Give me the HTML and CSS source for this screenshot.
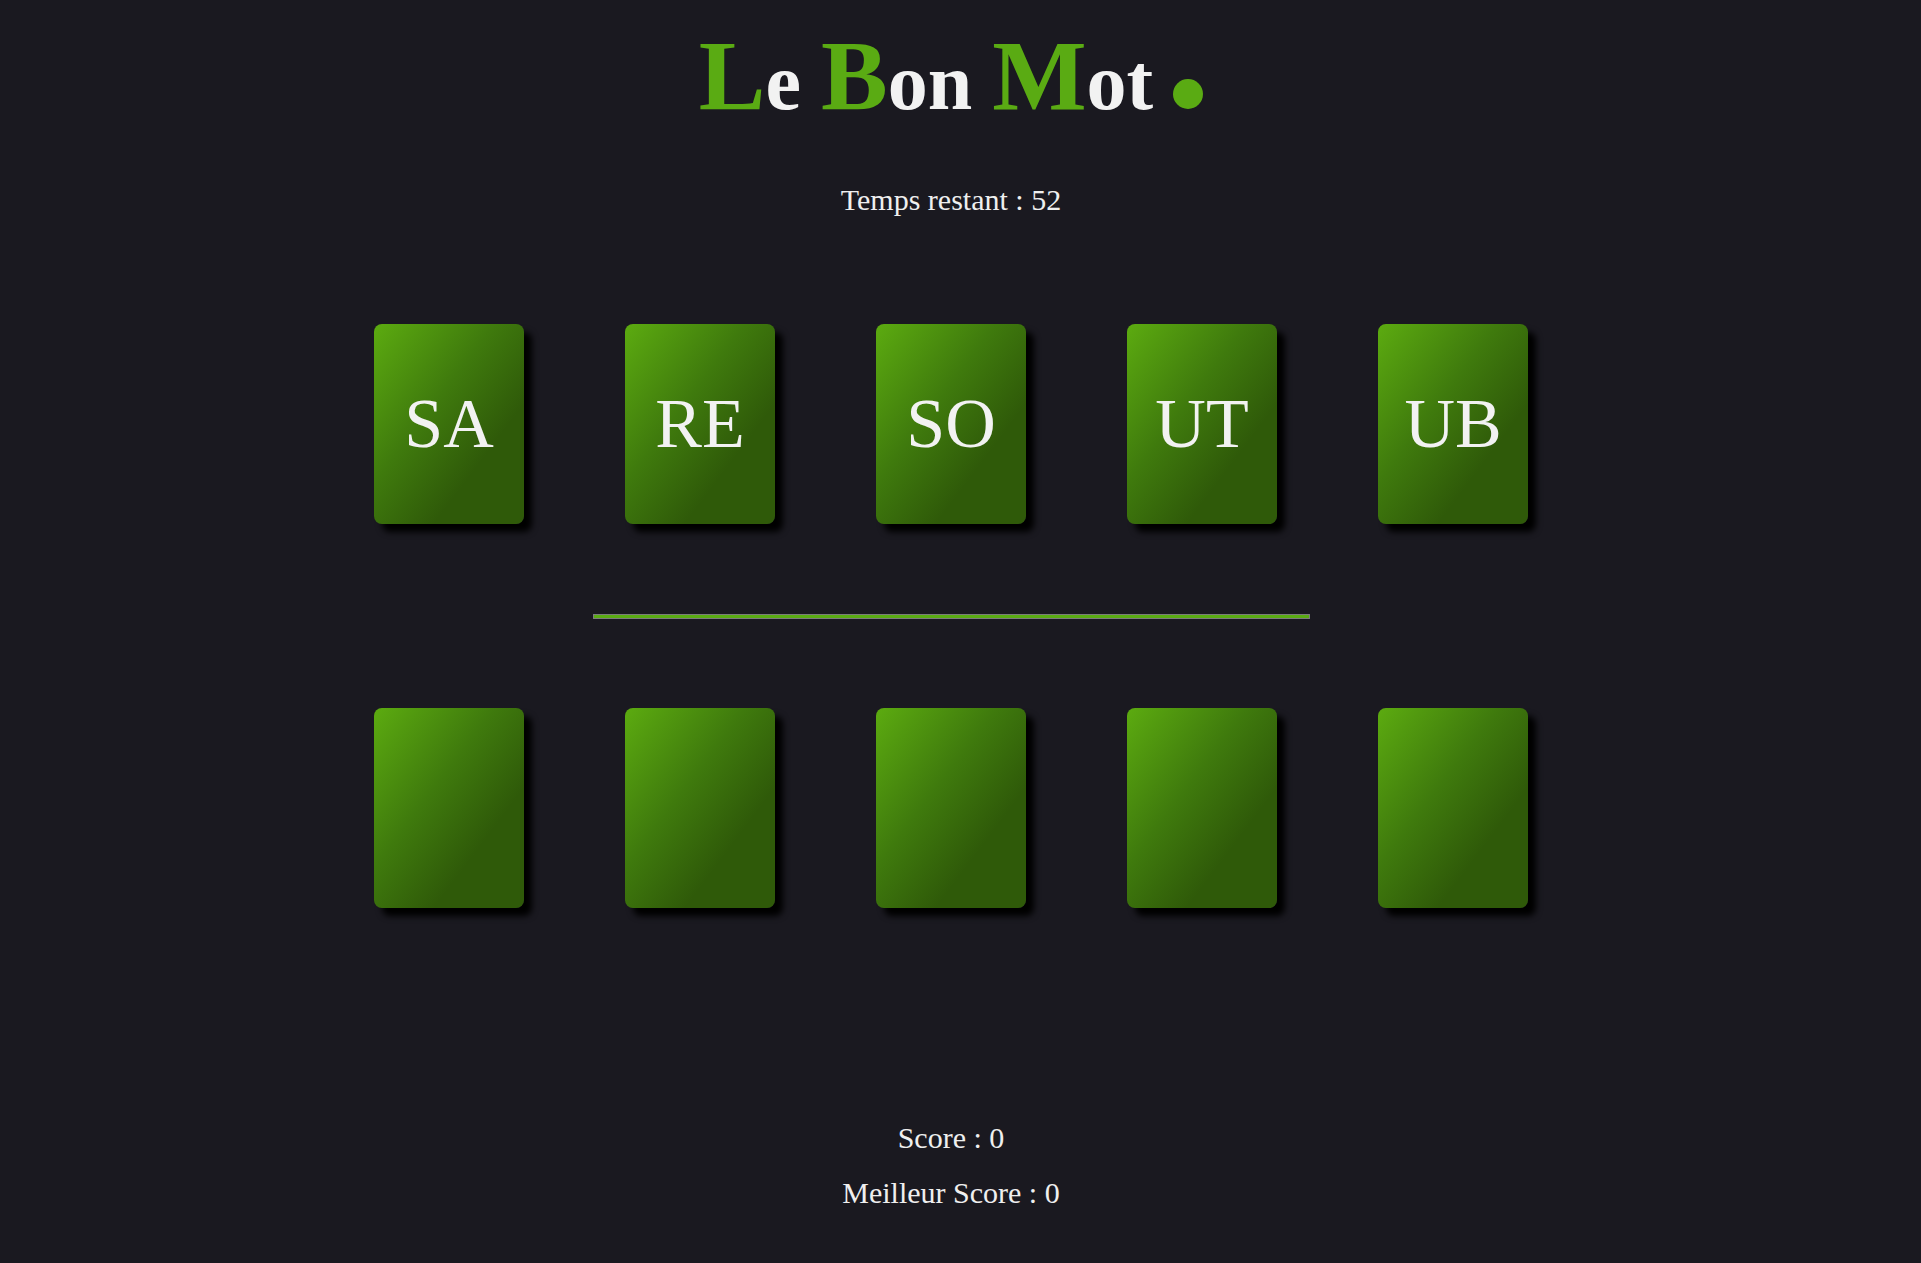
FILE: index.html
```html
<!DOCTYPE html>
<html lang="fr">
<head>
<meta charset="utf-8">
<title>Le Bon Mot</title>
<link rel="stylesheet" href="styles.css">
</head>
<body>
<div class="page">
  <h1 class="title"><span class="cap">L</span>e <span class="cap">B</span>on <span class="cap">M</span>ot <span class="dot"></span></h1>
  <p class="timer">Temps restant : 52</p>
  <div class="row row-top">
    <div class="card">SA</div>
    <div class="card">RE</div>
    <div class="card">SO</div>
    <div class="card">UT</div>
    <div class="card">UB</div>
  </div>
  <hr class="divider">
  <div class="row row-bottom">
    <div class="card"></div>
    <div class="card"></div>
    <div class="card"></div>
    <div class="card"></div>
    <div class="card"></div>
  </div>
  <p class="score">Score : 0</p>
  <p class="best">Meilleur Score : 0</p>
</div>
</body>
</html>
```

FILE: styles.css
```css
html, body {
  margin: 0;
  padding: 0;
  background: #1a1920;
}

body {
  font-family: "Liberation Serif", "Times New Roman", serif;
  color: #efefef;
}

.page {
  width: 1902px;
  display: flex;
  flex-direction: column;
  align-items: center;
}

.title {
  margin: 26px 0 0;
  font-size: 80px;
  line-height: 1;
  font-weight: bold;
  color: #f2f2f2;
  white-space: nowrap;
}

.cap {
  font-size: 100px;
  color: #5aab13;
}

.dot {
  display: inline-block;
  width: 30px;
  height: 30px;
  border-radius: 50%;
  background: #5aab13;
}

.timer,
.score,
.best {
  margin: 0;
  font-size: 30px;
  line-height: 34px;
}

.timer {
  margin-top: 57px;
}

.row {
  display: flex;
  justify-content: center;
  gap: 101px;
}

.row-top {
  margin-top: 107px;
}

.row-bottom {
  margin-top: 89px;
}

.card {
  width: 150px;
  height: 200px;
  border-radius: 8px;
  background: linear-gradient(to bottom right, #5cab10 0%, #3f7a0d 40%, #2f5a09 70%, #2f5a09 100%);
  box-shadow: 8px 8px 6px #000;
  display: flex;
  align-items: center;
  justify-content: center;
  font-size: 70px;
  color: #f2f2f2;
}

.divider {
  box-sizing: border-box;
  width: 717px;
  height: 5px;
  margin: 90px 0 0;
  border: 1px solid #7c7c7c;
  background: #5aab13;
}

.score {
  margin-top: 213px;
}

.best {
  margin-top: 21px;
}
```
